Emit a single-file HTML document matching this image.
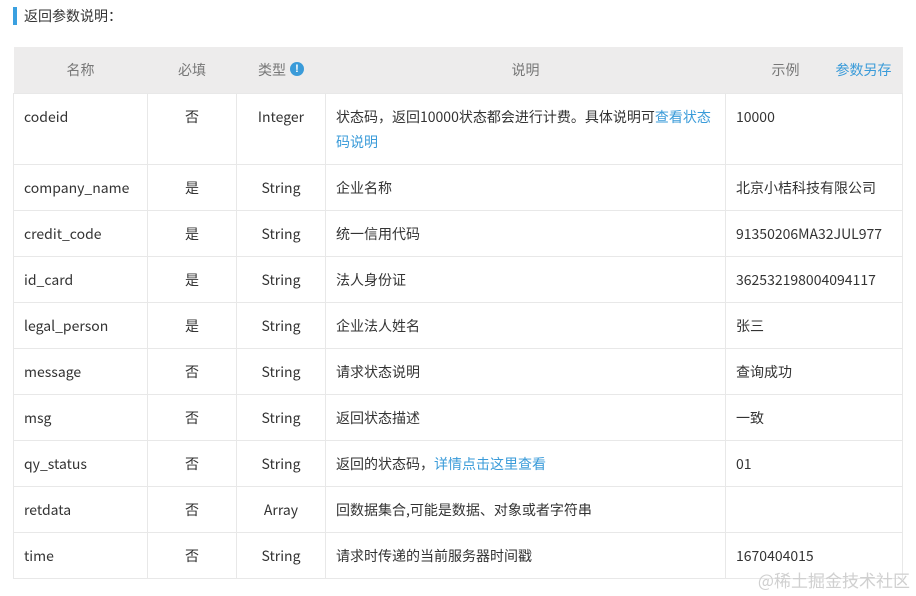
<!DOCTYPE html>
<html><head><meta charset="utf-8"><style>
*{margin:0;padding:0;box-sizing:border-box}
body{width:916px;height:596px;background:#fff;font-family:"Noto Sans CJK SC","Liberation Sans",sans-serif;font-size:14px;color:#333;position:relative;overflow:hidden}
.title{position:absolute;left:13px;top:7px;height:18px;border-left:4px solid #3aa0e0;padding-left:7px;line-height:18px;font-size:14px;color:#333}
table{position:absolute;left:13px;top:47px;width:889px;border-collapse:collapse;table-layout:fixed}
th{background:#edecec;height:46px;font-weight:normal;color:#777;font-size:14px}
td{border:1px solid #e8e8e8;height:46px;vertical-align:top;padding:11px 10px 0;line-height:25px}
td.c{text-align:center}
a{color:#3a9bd9;text-decoration:none}
.i{display:inline-block;width:14px;height:14px;border-radius:50%;background:#3a9bd9;color:#fff;font-size:11px;line-height:14px;text-align:center;font-weight:bold;vertical-align:3px;margin-left:4px;font-family:"Liberation Sans",sans-serif}
.wm{position:absolute;right:6px;top:567px;font-size:17px;color:#d0d0d0}
</style></head><body>
<div class="title">返回参数说明：</div>
<table>
<colgroup><col style="width:134px"><col style="width:89px"><col style="width:89px"><col style="width:400px"><col style="width:177px"></colgroup>
<tr><th>名称</th><th>必填</th><th>类型<span class="i">!</span></th><th>说明</th><th style="text-align:left;padding-left:46px">示例<a style="margin-left:36px">参数另存</a></th></tr>
<tr><td style="height:71px">codeid</td><td class="c">否</td><td class="c">Integer</td><td>状态码，返回10000状态都会进行计费。具体说明可<a>查看状态码说明</a></td><td>10000</td></tr>
<tr><td>company_name</td><td class="c">是</td><td class="c">String</td><td>企业名称</td><td>北京小桔科技有限公司</td></tr>
<tr><td>credit_code</td><td class="c">是</td><td class="c">String</td><td>统一信用代码</td><td>91350206MA32JUL977</td></tr>
<tr><td>id_card</td><td class="c">是</td><td class="c">String</td><td>法人身份证</td><td>362532198004094117</td></tr>
<tr><td>legal_person</td><td class="c">是</td><td class="c">String</td><td>企业法人姓名</td><td>张三</td></tr>
<tr><td>message</td><td class="c">否</td><td class="c">String</td><td>请求状态说明</td><td>查询成功</td></tr>
<tr><td>msg</td><td class="c">否</td><td class="c">String</td><td>返回状态描述</td><td>一致</td></tr>
<tr><td>qy_status</td><td class="c">否</td><td class="c">String</td><td>返回的状态码，<a>详情点击这里查看</a></td><td>01</td></tr>
<tr><td>retdata</td><td class="c">否</td><td class="c">Array</td><td>回数据集合,可能是数据、对象或者字符串</td><td></td></tr>
<tr><td>time</td><td class="c">否</td><td class="c">String</td><td>请求时传递的当前服务器时间戳</td><td>1670404015</td></tr>
</table>
<div class="wm">@稀土掘金技术社区</div>
</body></html>
